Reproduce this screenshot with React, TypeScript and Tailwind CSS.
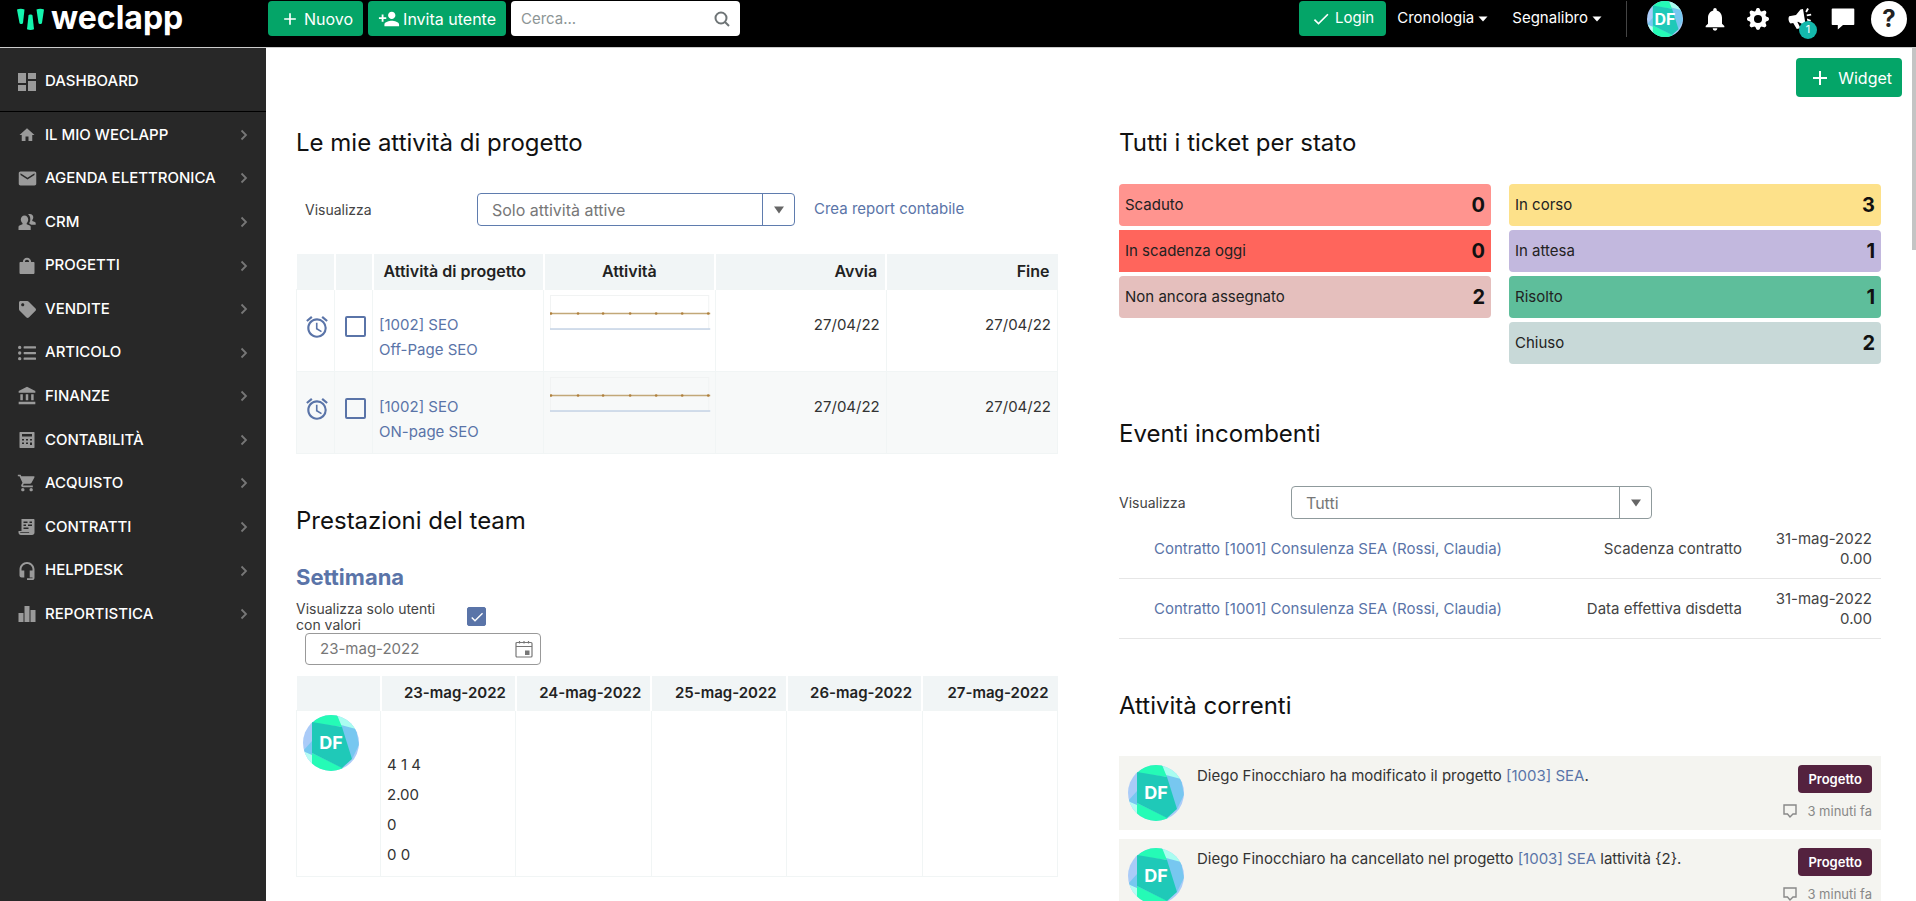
import clsx from "clsx";
import { useState } from "react";
import type { ReactNode } from "react";
import { BsGearFill } from "react-icons/bs";
import { FaListUl, FaTag } from "react-icons/fa";
import {
  MdAccessAlarm,
  MdAccountBalance,
  MdAdd,
  MdCheck,
  MdDashboard,
  MdEmail,
  MdHome,
  MdNotifications,
  MdPersonAddAlt1,
  MdShoppingCart,
} from "react-icons/md";

type NavItemProps = {
  label: string;
  icon: ReactNode;
};

const CrmIcon = () => (
  <svg viewBox="0 0 18 18" className="size-[18px]" fill="currentColor">
    <path d="M6.5 2.5c2.200 0 3.700 1.700 3.700 4 0 1.600-.6 2.800-1.500 3.500v1.200l3 1.200c.7.300 1 .8 1 1.500V17H.5v-3.100c0-.7.4-1.200 1-1.500l3-1.200V10C3.500 9.300 2.800 8.100 2.800 6.500c0-2.300 1.500-4 3.700-4z" />
    <path d="M11 1c2.500-.4 4.300.9 4.300 3.200 0 1.200-.4 2.100-1 2.700v1l2.600 1c.5.2.8.6.8 1.100v1.700h-4.400l-1.900-1V9.400c.6-.8.9-1.800.9-3C12.300 4.300 11.800 2.400 10 1.300z" />
  </svg>
);

const BagIcon = () => (
  <svg viewBox="0 0 18 18" className="size-[18px]" fill="currentColor">
    <path
      fillRule="evenodd"
      d="M9 .8c2.500 0 4 1.600 4.200 4.200h2.300c.6 0 1 .4 1 1v9.700c0 .7-.5 1.300-1.200 1.300H2.700c-.7 0-1.200-.6-1.200-1.300V6c0-.6.400-1 1-1h2.300C5 2.400 6.500.8 9 .8zm0 1.900c-1.300 0-2 .9-2.100 2.300h4.200C11 3.600 10.300 2.700 9 2.700z"
    />
  </svg>
);

const CalculatorIcon = () => (
  <svg viewBox="0 0 18 18" className="size-[18px]" fill="currentColor">
    <path
      fillRule="evenodd"
      d="M2 1h14c.3 0 .5.200.5.500v15c0 .3-.2.500-.5.500H2c-.3 0-.5-.2-.5-.500v-15C1.500 1.200 1.700 1 2 1zm2 2v2.500h10V3zm0 5v1.500h2V8zm4 0v1.500h2V8zm4 0v1.500h2V8zM4 11.500V13h2v-1.500zm4 0V13h2v-1.500zm4 0V14h2v-2.500z"
    />
  </svg>
);

const ContractIcon = () => (
  <svg viewBox="0 0 18 18" className="size-[18px]" fill="currentColor">
    <path
      fillRule="evenodd"
      d="M3.500 1h12c.6 0 1 .4 1 1v12.500c0 1.500-1 2.500-2.500 2.500H3c-1.500 0-2.500-1-2.500-2.500V13h3zm2 2.500V5h4V3.500zm6 0V5H14V3.500zM5.500 6.500V8H8V6.500zm4.500 0V8h4V6.500zM5.500 9.500V11h5V9.500zM2 14.200c.2.600.6.900 1.300.9h8.200c-.3-.3-.5-.6-.5-.9z"
    />
  </svg>
);

const HeadsetIcon = () => (
  <svg viewBox="0 0 18 18" className="size-[18px]" fill="currentColor">
    <path d="M9 0C4.900 0 1.500 3.300 1.500 7.500v6c0 1.200 1 2 2.200 2h2.600v-7H3.500v-1C3.500 4.400 6 2 9 2s5.500 2.400 5.500 5.500v1h-2.800v7h2.800v.7H9V18h5.400c1.200 0 2.100-.9 2.100-2.100V7.500C16.500 3.300 13.100 0 9 0z" />
  </svg>
);

const ChartIcon = () => (
  <svg viewBox="0 0 18 18" className="size-[18px]" fill="currentColor">
    <rect x="0.500" y="8" width="5" height="9" />
    <rect x="6.500" y="1" width="5" height="16" />
    <rect x="12.500" y="5" width="5" height="12" />
  </svg>
);

const BullhornIcon = () => (
  <svg viewBox="0 0 26 24" className="h-6 w-[26px]" fill="currentColor">
    <path d="M13.500 2.500L16 2l2.500 15-2.300.4-5.200-2.600-.6.100 2.300 4.600.4 1.700-3.300.8L6.200 16l-2.700.4C1.600 15 .9 11.400 2.200 9.300L9 8z" />
    <path d="M18.300 4.500L20.200 1l1.700.9-2 3.500zM19.600 7.500l4.400-.8.300 1.800-4.400.8zM20 11.500l4 1.400-.6 1.700-3.400-1.200z" />
  </svg>
);

const ChatIcon = () => (
  <svg viewBox="0 0 24 24" className="size-6" fill="currentColor">
    <path d="M1.500 1.500h21c.5 0 .8.300.8.800v14.900c0 .5-.3.800-.8.800H12l-5.200 4.500V18H1.500c-.5 0-.8-.3-.8-.8V2.300c0-.5.300-.8.800-.8z" />
  </svg>
);

const SearchIcon = () => (
  <svg
    viewBox="0 0 16 16"
    className="size-4 shrink-0"
    fill="none"
    stroke="#6e7476"
    strokeWidth="2"
  >
    <circle cx="7" cy="7" r="5.500" />
    <path d="M11 11l4 4" />
  </svg>
);

const CaretIcon = () => (
  <svg viewBox="0 0 10 6" className="h-1.5 w-2.5" fill="currentColor">
    <path d="M0.500 0.500H9.500L5 5.500z" />
  </svg>
);

const CalendarIcon = () => (
  <svg
    viewBox="0 0 18 18"
    className="size-[18px] shrink-0"
    fill="none"
    stroke="currentColor"
  >
    <rect x="1" y="2.500" width="16" height="14.500" rx="1" strokeWidth="1.200" />
    <path d="M1 6.500h16M4.500 1v2.500M9 1v2.500M13.500 1v2.500" strokeWidth="1.200" />
    <rect x="10.500" y="11" width="3.500" height="3.500" fill="currentColor" />
  </svg>
);

const LogoMark = () => (
  <svg viewBox="0 0 27 24" className="h-6 w-[27px]" fill="#14f5ae">
    <path d="M0 2.500C2 1.500 5.500 1.500 7.500 2.500L6 16c-.5 1.300-3 1.300-3.500 0z" />
    <path d="M19.500 2.500c2-1 5.500-1 7.500 0L25 16c-.5 1.300-3 1.300-3.500 0z" />
    <path d="M11.500 8.500c.5-1.400 3.500-1.400 4 0l1.500 13.700c-2 1-5 1-7 0z" />
  </svg>
);

const Avatar = ({ className, text }: { className: string; text: string }) => (
  <div className={clsx("relative shrink-0 overflow-hidden rounded-full", className)}>
    <svg viewBox="0 0 56 56" className="size-full">
      <rect width="56" height="56" fill="#aacbf8" />
      <path d="M35 0H56V16L36 14z" fill="#a9fdf0" />
      <path d="M0 36L10 40V56H0z" fill="#b5fdf3" />
      <path d="M38 10L53 14L56 30L49 44L40 30z" fill="#77c7f0" />
      <path d="M0 36L9 26V40z" fill="#77c7f0" />
      <path d="M9 8L18 0H34L39 12z" fill="#25fbb6" />
      <path d="M9 38L40 53L36 56H9z" fill="#25fbb6" />
      <path d="M9 7L39 12L49 44L39 53L9 38z" fill="#1fc9b8" />
    </svg>
    <span
      className={clsx(
        "absolute inset-0 flex items-center justify-center font-bold text-white",
        text
      )}
    >
      DF
    </span>
  </div>
);

const navItems: NavItemProps[] = [
  { label: "IL MIO WECLAPP", icon: <MdHome className="size-[18px]" /> },
  { label: "AGENDA ELETTRONICA", icon: <MdEmail className="size-[21px] shrink-0" /> },
  { label: "CRM", icon: <CrmIcon /> },
  { label: "PROGETTI", icon: <BagIcon /> },
  { label: "VENDITE", icon: <FaTag className="size-[17px]" /> },
  { label: "ARTICOLO", icon: <FaListUl className="size-[18px]" /> },
  { label: "FINANZE", icon: <MdAccountBalance className="size-5" /> },
  { label: "CONTABILITÀ", icon: <CalculatorIcon /> },
  { label: "ACQUISTO", icon: <MdShoppingCart className="size-5" /> },
  { label: "CONTRATTI", icon: <ContractIcon /> },
  { label: "HELPDESK", icon: <HeadsetIcon /> },
  { label: "REPORTISTICA", icon: <ChartIcon /> },
];

const tasks = [
  { code: "[1002] SEO", name: "Off-Page SEO", start: "27/04/22", end: "27/04/22" },
  { code: "[1002] SEO", name: "ON-page SEO", start: "27/04/22", end: "27/04/22" },
];

const ticketColumns = [
  [
    { label: "Scaduto", count: 0, color: "rounded bg-[#ff948f]" },
    { label: "In scadenza oggi", count: 0, color: "bg-[#ff655c]" },
    { label: "Non ancora assegnato", count: 2, color: "rounded bg-[#e5bfbd]" },
  ],
  [
    { label: "In corso", count: 3, color: "rounded bg-[#fde18a]" },
    { label: "In attesa", count: 1, color: "rounded bg-[#c2b8de]" },
    { label: "Risolto", count: 1, color: "rounded bg-[#5ebe9b]" },
    { label: "Chiuso", count: 2, color: "rounded bg-[#c8d9d8]" },
  ],
];

const days = ["23-mag-2022", "24-mag-2022", "25-mag-2022", "26-mag-2022", "27-mag-2022"];

const events = ["Scadenza contratto", "Data effettiva disdetta"];

const activities = [
  { before: "Diego Finocchiaro ha modificato il progetto ", after: "." },
  { before: "Diego Finocchiaro ha cancellato nel progetto ", after: " lattività {2}." },
];

const Title = ({ children }: { children: ReactNode }) => (
  <h2 className="text-2xl leading-8 text-[#111]">{children}</h2>
);

type SelectBoxProps = {
  id: string;
  value: string;
  className: string;
  line: string;
};

const SelectBox = ({ id, value, className, line }: SelectBoxProps) => (
  <div className={clsx("relative flex h-[33px] rounded border", line, className)}>
    <select
      id={id}
      className="h-full w-full appearance-none bg-transparent pl-3.5 text-base text-[#777] outline-none"
    >
      <option>{value}</option>
    </select>
    <span
      className={clsx(
        "pointer-events-none absolute inset-y-0 right-0 flex w-8 items-center justify-center border-l",
        line
      )}
    >
      <svg viewBox="0 0 10 8" className="h-2 w-2.5" fill="#666">
        <path d="M0 0.500H10L5 7.500z" />
      </svg>
    </span>
  </div>
);

// small line chart shown for every project task
const Sparkline = () => (
  <svg viewBox="0 0 160 36" className="h-9 w-full" preserveAspectRatio="none">
    <rect x="0.500" y="0.500" width="158" height="34" fill="none" stroke="#f1f3f3" />
    <path d="M0 18.500H160" stroke="#c2a878" strokeWidth="1.500" />
    <path d="M0 34H160" stroke="#c5d3e6" strokeWidth="1.500" />
    {[1, 28, 53, 80, 106, 132, 158].map((x) => (
      <circle key={x} cx={x} cy="18.500" r="1.300" fill="#b0803c" />
    ))}
  </svg>
);

const Header = () => (
  <header className="flex h-12 shrink-0 items-start border-b border-[#ccc] bg-black pt-px text-[15px] text-white">
    <a href="#" className="flex h-9 w-[267px] shrink-0 items-center gap-[7px] pl-[17px]">
      <LogoMark />
      <span className="pb-0.5 text-[32px] leading-10 font-bold">weclapp</span>
    </a>
    <button className="ml-px flex h-[35px] items-center rounded bg-[#04a568] pr-2.5 pl-3 text-base">
      <MdAdd className="mr-1 size-5" />
      Nuovo
    </button>
    <button className="ml-[5px] flex h-[35px] items-center rounded bg-[#04a568] px-2.5 text-base">
      <MdPersonAddAlt1 className="mr-[3px] size-[22px] -scale-x-100" />
      Invita utente
    </button>
    <label className="ml-[5px] flex h-[35px] w-[229px] items-center rounded bg-white pr-2.5 pl-2.5">
      <input
        type="text"
        aria-label="Cerca"
        placeholder="Cerca..."
        className="w-full min-w-0 leading-6 text-[#333] outline-none placeholder:text-[#8d9596]"
      />
      <SearchIcon />
    </label>
    <div className="ml-auto flex h-[35px] items-center">
      <button className="flex h-[35px] items-center rounded bg-[#04a568] px-3">
        <MdCheck className="mr-1 size-5" />
        Login
      </button>
      <button className="ml-[11px] flex items-center gap-1">
        Cronologia
        <CaretIcon />
      </button>
      <button className="ml-6 flex items-center gap-1">
        Segnalibro
        <CaretIcon />
      </button>
      <span className="ml-6 h-9 w-px bg-[#444]" />
      <Avatar className="ml-5 size-9" text="text-base" />
      <button aria-label="Notifiche" className="ml-[18px]">
        <MdNotifications className="size-7" />
      </button>
      <button aria-label="Impostazioni" className="ml-[18px]">
        <BsGearFill className="size-[22px]" />
      </button>
      <button aria-label="Novità" className="relative ml-[18px]">
        <BullhornIcon />
        <span className="absolute -right-1 -bottom-2 flex size-[18px] items-center justify-center rounded-full bg-[#14b8ab] text-[11px]">
          1
        </span>
      </button>
      <button aria-label="Messaggi" className="ml-[18px]">
        <ChatIcon />
      </button>
      <button
        aria-label="Aiuto"
        className="mr-[9px] ml-4 flex size-9 items-center justify-center rounded-full bg-white text-2xl font-bold text-[#222]"
      >
        ?
      </button>
    </div>
  </header>
);

const Sidebar = () => (
  <nav className="w-[266px] shrink-0 bg-[#282828] text-[15px] font-medium text-white">
    <a
      href="#"
      className="flex h-16 items-center border-b border-black pt-1 pl-[15px]"
    >
      <MdDashboard className="size-6 text-[#9a9a9a]" />
      <span className="ml-1.5">DASHBOARD</span>
    </a>
    <ul className="mt-px grid h-[523px] auto-rows-fr">
      {navItems.map((item) => (
        <li key={item.label}>
          <a href="#" className="flex h-full items-center pr-[18px] pl-[17px]">
            <span className="flex w-5 justify-center text-[#9a9a9a]">{item.icon}</span>
            <span className="ml-2">{item.label}</span>
            <svg
              viewBox="0 0 8 12"
              className="ml-auto h-3 w-2"
              fill="none"
              stroke="#777"
              strokeWidth="1.800"
            >
              <path d="M1.500 1.500L6 6L1.500 10.500" />
            </svg>
          </a>
        </li>
      ))}
    </ul>
  </nav>
);

const ProjectTasks = () => (
  <section>
    <Title>Le mie attività di progetto</Title>
    <div className="mt-[34px] flex items-center pl-[9px]">
      <label htmlFor="task-view" className="w-[172px] text-sm text-[#444]">
        Visualizza
      </label>
      <SelectBox
        id="task-view"
        value="Solo attività attive"
        className="w-[318px]"
        line="border-[#5f7cae]"
      />
      <a href="#" className="ml-[19px] text-[#5a74a8]">
        Crea report contabile
      </a>
    </div>
    <table className="mt-7 w-full table-fixed border-collapse">
      <colgroup>
        <col className="w-[38px]" />
        <col className="w-[38px]" />
        <col />
        <col />
        <col />
        <col />
      </colgroup>
      <thead>
        <tr className="h-[35px] bg-[#f1f5f6] text-base text-[#222]">
          <th className="border-r-2 border-white" />
          <th className="border-r-2 border-white" />
          <th className="border-r-2 border-white pl-2.5 text-left font-semibold">
            Attività di progetto
          </th>
          <th className="border-r-2 border-white text-center font-semibold">Attività</th>
          <th className="border-r-2 border-white pr-2 text-right font-semibold">Avvia</th>
          <th className="pr-2 text-right font-semibold">Fine</th>
        </tr>
      </thead>
      <tbody>
        {tasks.map((task) => (
          <tr key={task.name} className="h-[82px] align-top even:bg-[#f7f9f9]">
            <td className="border border-[#f1f5f5] pt-6 pl-[3px] text-[#5a74a8]">
              <MdAccessAlarm className="mx-auto size-[26px]" />
            </td>
            <td className="border border-[#f1f5f5] pt-[26px] pl-[3px]">
              <input
                type="checkbox"
                aria-label={task.name}
                className="mx-auto block size-[21px] appearance-none rounded-xs border-2 border-[#5a74a8]"
              />
            </td>
            <td className="border border-[#f1f5f5] pt-[22px] pl-1.5 leading-[25px] text-[#5a74a8]">
              <a href="#" className="block">
                {task.code}
              </a>
              <a href="#" className="block">
                {task.name}
              </a>
            </td>
            <td className="border border-[#f1f5f5] pt-[5px] pr-1 pl-1.5">
              <Sparkline />
            </td>
            <td className="border border-[#f1f5f5] pt-[22px] pr-1.5 text-right leading-[25px] text-[#333]">
              {task.start}
            </td>
            <td className="border border-[#f1f5f5] pt-[22px] pr-1.5 text-right leading-[25px] text-[#333]">
              {task.end}
            </td>
          </tr>
        ))}
      </tbody>
    </table>
  </section>
);

const TeamPerformance = () => {
  const [onlyWithValues, setOnlyWithValues] = useState(true);

  return (
    <section className="mt-[51px]">
      <Title>Prestazioni del team</Title>
      <h3 className="mt-6 text-[22px] leading-8 font-bold text-[#5a74a8]">Settimana</h3>
      <div className="mt-2 flex items-center">
        <label
          htmlFor="only-values"
          className="w-[171px] pr-5 text-sm leading-4 text-[#444]"
        >
          Visualizza solo utenti con valori
        </label>
        <span className="relative flex">
          <input
            id="only-values"
            type="checkbox"
            checked={onlyWithValues}
            onChange={(e) => setOnlyWithValues(e.target.checked)}
            className="size-[19px] appearance-none rounded-xs border border-[#5a74a8] checked:bg-[#5a74a8]"
          />
          {onlyWithValues && (
            <MdCheck className="pointer-events-none absolute inset-0 m-auto size-4 text-white" />
          )}
        </span>
      </div>
      <div className="ml-[9px] flex h-8 w-[236px] items-center rounded border border-[#999] pr-[7px] pl-3.5 text-[#777]">
        <input
          type="text"
          aria-label="Data"
          defaultValue="23-mag-2022"
          className="w-full min-w-0 leading-6 outline-none"
        />
        <CalendarIcon />
      </div>
      <table className="mt-[11px] w-full table-fixed border-collapse">
        <colgroup>
          <col className="w-[84px]" />
          {days.map((day) => (
            <col key={day} />
          ))}
        </colgroup>
        <thead>
          <tr className="h-[35px] bg-[#f1f5f6] text-[#222]">
            <th className="border-r-2 border-white" />
            {days.map((day) => (
              <th
                key={day}
                className="border-r-2 border-white pr-[9px] text-right font-semibold last:border-r-0"
              >
                {day}
              </th>
            ))}
          </tr>
        </thead>
        <tbody>
          <tr className="h-[166px] align-top">
            <td className="border border-[#f1f5f5] pt-1 pl-1.5">
              <Avatar className="size-14" text="text-lg" />
            </td>
            <td className="border border-[#f1f5f5] pt-[39px] pl-1.5 leading-[30px] text-[#333]">
              <p>4 1 4</p>
              <p>2.00</p>
              <p>0</p>
              <p>0 0</p>
            </td>
            {days.slice(1).map((day) => (
              <td key={day} className="border border-[#f1f5f5]" />
            ))}
          </tr>
        </tbody>
      </table>
    </section>
  );
};

const TicketsByStatus = () => (
  <section>
    <Title>Tutti i ticket per stato</Title>
    <div className="mt-[25px] grid grid-cols-2 gap-[18px]">
      {ticketColumns.map((column, i) => (
        <div key={i} className="flex flex-col gap-1">
          {column.map((ticket) => (
            <div
              key={ticket.label}
              className={clsx(
                "flex h-[42px] items-center justify-between px-1.5 leading-6 text-[#222]",
                ticket.color
              )}
            >
              <span>{ticket.label}</span>
              <span className="text-xl font-bold text-[#111]">{ticket.count}</span>
            </div>
          ))}
        </div>
      ))}
    </div>
  </section>
);

const UpcomingEvents = () => (
  <section className="mt-[54px]">
    <Title>Eventi incombenti</Title>
    <div className="mt-9 flex items-center">
      <label htmlFor="event-view" className="w-[172px] text-sm text-[#444]">
        Visualizza
      </label>
      <SelectBox
        id="event-view"
        value="Tutti"
        className="w-[361px]"
        line="border-[#8f9a9c]"
      />
    </div>
    <ul>
      {events.map((event) => (
        <li
          key={event}
          className="flex h-[60px] items-center border-b border-[#e6e6e6] pr-[9px] pl-[35px] leading-6 text-[#444]"
        >
          <a href="#" className="text-[#5a74a8]">
            Contratto [1001] Consulenza SEA (Rossi, Claudia)
          </a>
          <span className="ml-auto">{event}</span>
          <span className="w-[130px] text-right leading-5">
            31-mag-2022
            <br />
            0.00
          </span>
        </li>
      ))}
    </ul>
  </section>
);

const CurrentActivities = () => (
  <section className="mt-[51px]">
    <Title>Attività correnti</Title>
    <ul className="mt-[34px] flex flex-col gap-[9px]">
      {activities.map((activity) => (
        <li
          key={activity.before}
          className="flex h-[74px] items-start bg-[#f4f4f0] p-[9px]"
        >
          <Avatar className="size-14" text="text-lg" />
          <p className="ml-[13px] text-[#333]">
            {activity.before}
            <a href="#" className="text-[#5a74a8]">
              [1003] SEA
            </a>
            {activity.after}
          </p>
          <div className="ml-auto flex flex-col items-end">
            <span className="rounded bg-[#54223f] px-2.5 text-[13px] leading-7 font-semibold text-white">
              Progetto
            </span>
            <span className="mt-2 flex items-center gap-2.5 text-[13px] leading-5 text-[#888]">
              <svg
                viewBox="0 0 14 14"
                className="size-3.5"
                fill="none"
                stroke="currentColor"
                strokeWidth="1.400"
              >
                <path d="M1 1H13V10H10L7 13L4.500 10H1z" />
              </svg>
              3 minuti fa
            </span>
          </div>
        </li>
      ))}
    </ul>
  </section>
);

const App = () => {
  return (
    <div className="flex h-screen flex-col overflow-hidden bg-white font-['Inter',sans-serif] text-[15px]">
      <Header />
      <div className="flex min-h-0 flex-1">
        <Sidebar />
        <main className="min-w-0 flex-1 overflow-hidden">
          <div className="flex justify-end pt-2.5 pr-2.5">
            <button className="flex h-[39px] items-center rounded bg-[#04a568] pr-2.5 pl-3 text-base text-white">
              <MdAdd className="mr-1.5 size-6" />
              Widget
            </button>
          </div>
          <div className="mt-[30px] grid grid-cols-2 gap-[61px] pr-[31px] pl-[30px]">
            <div>
              <ProjectTasks />
              <TeamPerformance />
            </div>
            <div>
              <TicketsByStatus />
              <UpcomingEvents />
              <CurrentActivities />
            </div>
          </div>
        </main>
        <div className="w-1 shrink-0">
          <div className="h-[202px] bg-[#c4c4c4]" />
        </div>
      </div>
    </div>
  );
};

export default App;
